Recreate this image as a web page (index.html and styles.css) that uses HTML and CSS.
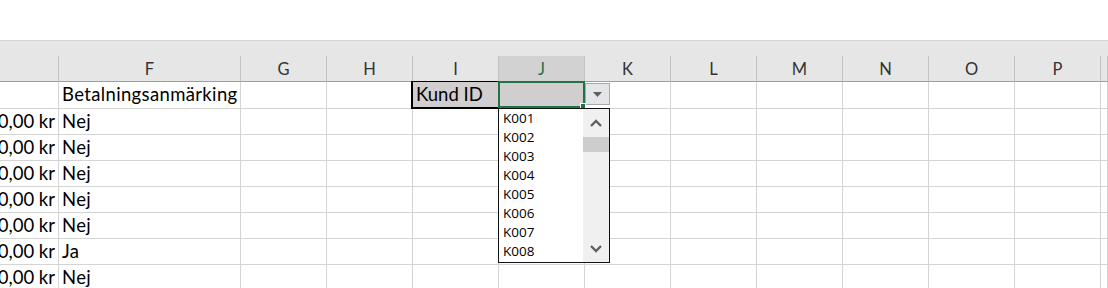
FILE: index.html
```html
<!DOCTYPE html>
<html lang="sv">
<head>
    <meta charset="UTF-8">
    <title>Kundlista</title>
    <link rel="stylesheet" href="styles.css">
</head>
<body>

    <!-- Ribbon edge -->
    <div class="topbar"></div>

    <!-- Column headers -->
    <div class="head-band">
        <div class="grid">
            <div class="col-head"></div>
            <div class="col-head">F</div>
            <div class="col-head">G</div>
            <div class="col-head">H</div>
            <div class="col-head">I</div>
            <div class="col-head selected">J</div>
            <div class="col-head">K</div>
            <div class="col-head">L</div>
            <div class="col-head">M</div>
            <div class="col-head">N</div>
            <div class="col-head">O</div>
            <div class="col-head">P</div>
            <div class="col-head"></div>
        </div>
    </div>

    <!-- Cells -->
    <div class="sheet">
        <div class="grid row first">
            <div class="cell num"></div>
            <div class="cell">Betalningsanmärking</div>
            <div class="cell"></div>
            <div class="cell"></div>
            <div class="cell label">Kund ID</div>
            <div class="cell active">
                <span class="fill-handle"></span>
                <div class="dd-button">
                    <svg width="9" height="5" viewBox="0 0 9 5"><polygon points="0,0 9,0 4.5,5" fill="#5f5f5f"/></svg>
                </div>
                <div class="dd-list">
                    <div class="dd-items">
                        <div class="dd-item">K001</div>
                        <div class="dd-item">K002</div>
                        <div class="dd-item">K003</div>
                        <div class="dd-item">K004</div>
                        <div class="dd-item">K005</div>
                        <div class="dd-item">K006</div>
                        <div class="dd-item">K007</div>
                        <div class="dd-item">K008</div>
                    </div>
                    <div class="dd-scroll">
                        <div class="dd-arrow up">
                            <svg width="12" height="8" viewBox="0 0 12 8"><polyline points="1,7 6,2 11,7" fill="none" stroke="#606060" stroke-width="2.4"/></svg>
                        </div>
                        <div class="dd-thumb"></div>
                        <div class="dd-track"></div>
                        <div class="dd-arrow down">
                            <svg width="12" height="8" viewBox="0 0 12 8"><polyline points="1,1 6,6 11,1" fill="none" stroke="#606060" stroke-width="2.4"/></svg>
                        </div>
                    </div>
                </div>
            </div>
            <div class="cell"></div><div class="cell"></div><div class="cell"></div><div class="cell"></div>
            <div class="cell"></div><div class="cell"></div><div class="cell"></div>
        </div>

        <div class="grid row">
            <div class="cell num">0,00 kr</div><div class="cell">Nej</div>
            <div class="cell"></div><div class="cell"></div><div class="cell"></div><div class="cell"></div>
            <div class="cell"></div><div class="cell"></div><div class="cell"></div><div class="cell"></div>
            <div class="cell"></div><div class="cell"></div><div class="cell"></div>
        </div>
        <div class="grid row">
            <div class="cell num">0,00 kr</div><div class="cell">Nej</div>
            <div class="cell"></div><div class="cell"></div><div class="cell"></div><div class="cell"></div>
            <div class="cell"></div><div class="cell"></div><div class="cell"></div><div class="cell"></div>
            <div class="cell"></div><div class="cell"></div><div class="cell"></div>
        </div>
        <div class="grid row">
            <div class="cell num">0,00 kr</div><div class="cell">Nej</div>
            <div class="cell"></div><div class="cell"></div><div class="cell"></div><div class="cell"></div>
            <div class="cell"></div><div class="cell"></div><div class="cell"></div><div class="cell"></div>
            <div class="cell"></div><div class="cell"></div><div class="cell"></div>
        </div>
        <div class="grid row">
            <div class="cell num">0,00 kr</div><div class="cell">Nej</div>
            <div class="cell"></div><div class="cell"></div><div class="cell"></div><div class="cell"></div>
            <div class="cell"></div><div class="cell"></div><div class="cell"></div><div class="cell"></div>
            <div class="cell"></div><div class="cell"></div><div class="cell"></div>
        </div>
        <div class="grid row">
            <div class="cell num">0,00 kr</div><div class="cell">Nej</div>
            <div class="cell"></div><div class="cell"></div><div class="cell"></div><div class="cell"></div>
            <div class="cell"></div><div class="cell"></div><div class="cell"></div><div class="cell"></div>
            <div class="cell"></div><div class="cell"></div><div class="cell"></div>
        </div>
        <div class="grid row">
            <div class="cell num">0,00 kr</div><div class="cell">Ja</div>
            <div class="cell"></div><div class="cell"></div><div class="cell"></div><div class="cell"></div>
            <div class="cell"></div><div class="cell"></div><div class="cell"></div><div class="cell"></div>
            <div class="cell"></div><div class="cell"></div><div class="cell"></div>
        </div>
        <div class="grid row">
            <div class="cell num">0,00 kr</div><div class="cell">Nej</div>
            <div class="cell"></div><div class="cell"></div><div class="cell"></div><div class="cell"></div>
            <div class="cell"></div><div class="cell"></div><div class="cell"></div><div class="cell"></div>
            <div class="cell"></div><div class="cell"></div><div class="cell"></div>
        </div>
    </div>

</body>
</html>
```

FILE: styles.css
```css
/* Global */
body {
    margin: 0;
    font-family: Lato, "Liberation Sans", sans-serif;
    background-color: #fff;
    color: #000;
    overflow: hidden;
}

.topbar {
    height: 40px;
    border-bottom: 1px solid #d5d5d5;
}

.grid {
    display: grid;
    grid-template-columns: 59px 182px repeat(10, 86px) 1fr;
}

/* Column headers */
.head-band {
    background-color: #e6e6e6;
    padding-top: 15px;
}

.col-head {
    box-sizing: border-box;
    height: 26px;
    border-right: 1px solid #c2c2c2;
    border-bottom: 1px solid #9e9e9e;
    display: flex;
    align-items: center;
    justify-content: center;
    font-size: 16.5px;
    color: #333;
}

.col-head.selected {
    background-color: #d2d2d2;
    color: #217346;
}

/* Cells */
.cell {
    box-sizing: border-box;
    height: 26px;
    padding: 0 3px 3px;
    border-right: 1px solid #d4d4d4;
    border-bottom: 1px solid #d4d4d4;
    display: flex;
    align-items: flex-end;
    font-size: 18.5px;
    letter-spacing: 0.35px;
    line-height: 20px;
    white-space: nowrap;
    position: relative;
}

.row.first .cell {
    height: 27px;
    padding-bottom: 4px;
}

.cell.num {
    justify-content: flex-end;
    letter-spacing: 0;
}

.cell.label {
    background-color: #d0cece;
    letter-spacing: 0;
}

.cell.label::after {
    content: "";
    position: absolute;
    left: -2px;
    top: -1px;
    right: -1px;
    bottom: -1px;
    border-top: 1px solid #000;
    border-left: 2px solid #000;
    border-bottom: 2px solid #000;
}

.cell.active {
    background-color: #d0cece;
}

.cell.active::after {
    content: "";
    position: absolute;
    left: -1px;
    top: -1px;
    right: -1px;
    bottom: 0;
    border: 2px solid #217346;
}

.fill-handle {
    position: absolute;
    right: -2px;
    bottom: -1px;
    width: 4px;
    height: 4px;
    background-color: #217346;
    border: 1px solid #fff;
    z-index: 2;
}

/* Data validation dropdown */
.dd-button {
    position: absolute;
    left: 86px;
    top: 1px;
    box-sizing: border-box;
    width: 25px;
    height: 22px;
    background-color: #e3e5e9;
    border: 1px solid #a9a9a9;
    display: flex;
    align-items: center;
    justify-content: center;
}

.dd-list {
    position: absolute;
    left: -1px;
    top: 26px;
    box-sizing: border-box;
    width: 112px;
    height: 155px;
    background-color: #fff;
    border: 1px solid #111;
    display: flex;
    z-index: 3;
    overflow: hidden;
    letter-spacing: 0;
}

.dd-items {
    flex: 1;
    font-family: "Open Sans", "Noto Sans", sans-serif;
    font-size: 13.5px;
    line-height: 19px;
}

.dd-item {
    padding-left: 4px;
}

.dd-scroll {
    width: 26px;
    background-color: #f0f0f0;
    display: flex;
    flex-direction: column;
}

.dd-arrow {
    display: flex;
    justify-content: center;
}

.dd-arrow.up {
    height: 28px;
    align-items: center;
}

.dd-arrow.down {
    height: 26px;
    align-items: center;
}

.dd-thumb {
    height: 15px;
    background-color: #cdcdcd;
}

.dd-track {
    flex: 1;
}
```
